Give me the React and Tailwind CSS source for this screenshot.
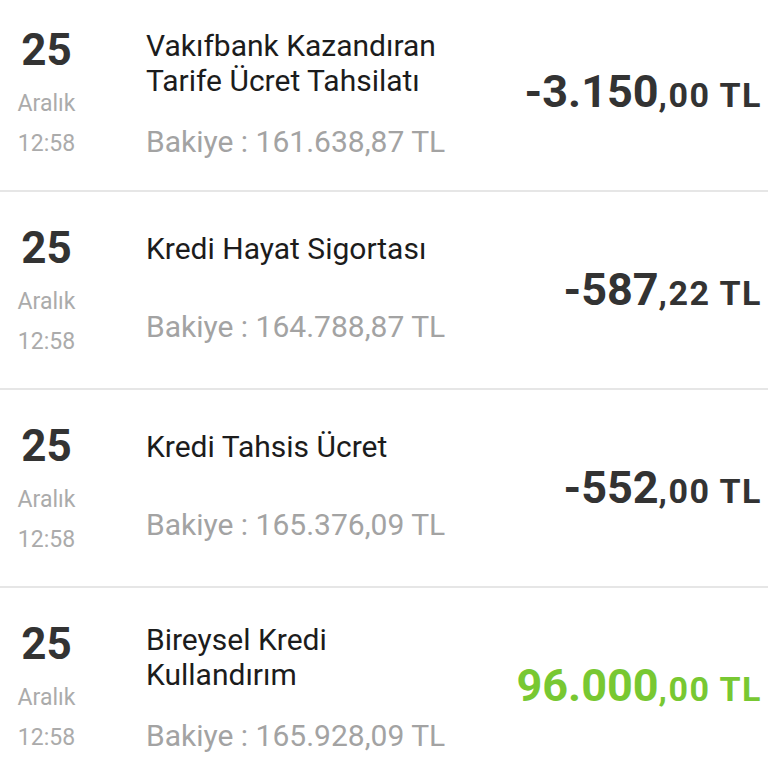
import React from "react";

// Transaction rows, as shown in the account history
const transactions = [
    {
        title: ["Vakıfbank Kazandıran", "Tarife Ücret Tahsilatı"],
        balance: "161.638,87 TL",
        main: "-3.150",
        cents: ",00 TL",
        income: false,
    },
    {
        title: ["Kredi Hayat Sigortası"],
        balance: "164.788,87 TL",
        main: "-587",
        cents: ",22 TL",
        income: false,
    },
    {
        title: ["Kredi Tahsis Ücret"],
        balance: "165.376,09 TL",
        main: "-552",
        cents: ",00 TL",
        income: false,
    },
    {
        title: ["Bireysel Kredi", "Kullandırım"],
        balance: "165.928,09 TL",
        main: "96.000",
        cents: ",00 TL",
        income: true,
    },
];

function TransactionRow({ item }) {
    const twoLines = item.title.length > 1;

    return (
        <div className="flex h-[196px] items-start">
            {/* Date column */}
            <div className="w-[93px] shrink-0 text-center">
                <p className="mt-[34px] text-[44px] leading-[44px] font-bold text-[#333333]">25</p>
                <p className="mt-[20px] text-[23px] leading-[23px] text-[#ababab]">Aralık</p>
                <p className="mt-[17px] text-[23px] leading-[23px] text-[#ababab]">12:58</p>
            </div>

            {/* Description and balance */}
            <div className={twoLines ? "ml-[53px] flex-1 pt-[34px]" : "ml-[53px] flex-1 pt-[39px]"}>
                {item.title.map((line) => (
                    <p key={line} className="text-[30px] leading-[35px] text-[#1c1c1c] whitespace-nowrap">{line}</p>
                ))}
                <p className={twoLines ? "mt-[26px] text-[30px] leading-[35px] text-[#a3a3a3] whitespace-nowrap" : "mt-[43px] text-[30px] leading-[35px] text-[#a3a3a3] whitespace-nowrap"}>
                    Bakiye : {item.balance}
                </p>
            </div>

            {/* Amount */}
            <div className="self-center pr-[6px] whitespace-nowrap">
                <p className={item.income ? "font-bold text-[#78c832]" : "font-bold text-[#333333]"}>
                    <span className="text-[45px]">{item.main}</span>
                    <span className="text-[34px] tracking-[1.5px]">{item.cents}</span>
                </p>
            </div>
        </div>
    );
}

export default function App() {
    return (
        <div className="h-[768px] w-[768px] overflow-hidden bg-white font-['Roboto',sans-serif]">
            <div className="-mt-[6px]">
                {transactions.map((item, i) => (
                    <div key={i}>
                        <TransactionRow item={item} />
                        {i < transactions.length - 1 && <div className="h-[2px] bg-[#e6e6e6]" />}
                    </div>
                ))}
            </div>
        </div>
    );
}
